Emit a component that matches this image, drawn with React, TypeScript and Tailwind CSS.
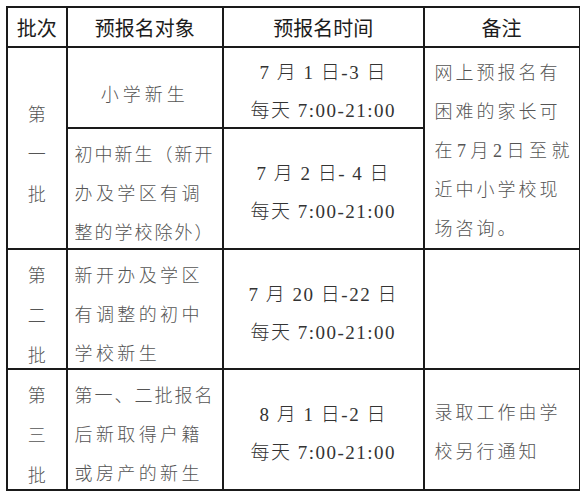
type Line = { text: string; track: string };

function Header({ children }: { children: string }) {
  return (
    <div className="flex items-center justify-center bg-white pt-[2px] text-[20px] text-[#1c1c1c] font-['Noto_Sans_CJK_SC',sans-serif]">
      {children}
    </div>
  );
}

function Batch({ chars, span }: { chars: string[]; span?: boolean }) {
  return (
    <div
      className={`flex flex-col items-center justify-center bg-white pt-[10px] text-[18px] font-light leading-[40px] text-[#555] font-['Noto_Sans_CJK_SC',sans-serif] ${
        span ? "row-span-2" : ""
      }`}
    >
      {chars.map((c, i) => (
        <span key={i}>{c}</span>
      ))}
    </div>
  );
}

function Target({ lines }: { lines: Line[] }) {
  return (
    <div className="flex flex-col justify-center bg-white pl-[7px] pt-[9px] text-[18px] font-light leading-[39px] text-[#555] font-['Noto_Sans_CJK_SC',sans-serif]">
      {lines.map((l, i) => (
        <span key={i} className={`whitespace-nowrap ${l.track}`}>
          {l.text}
        </span>
      ))}
    </div>
  );
}

function Time({ first, second }: { first: string; second: string }) {
  return (
    <div className="flex flex-col items-center justify-center bg-white pt-[10px] text-[19px] font-light leading-[38px] tracking-[1.5px] text-[#333] font-['Liberation_Serif','Noto_Sans_CJK_SC',serif]">
      <span className="whitespace-pre">{first}</span>
      <span className="whitespace-pre">{second}</span>
    </div>
  );
}

function Note({ lines, span }: { lines: Line[]; span?: boolean }) {
  return (
    <div
      className={`flex flex-col justify-center bg-white pl-[10px] pt-[8px] text-[18px] font-light leading-[39px] text-[#555] font-['Liberation_Serif','Noto_Sans_CJK_SC',serif] ${
        span ? "row-span-2" : ""
      }`}
    >
      {lines.map((l, i) => (
        <span key={i} className={`whitespace-nowrap ${l.track}`}>
          {l.text}
        </span>
      ))}
    </div>
  );
}

export default function App() {
  return (
    <div className="h-[496px] w-[586px] bg-white pl-[6px] pt-[6px]">
      <div className="grid w-fit grid-cols-[58.5px_154.5px_199.5px_154px] grid-rows-[38.5px_79.5px_119.5px_118.5px_119.5px] gap-[1.5px] bg-[#1a1a1a] p-[1.5px]">
        <Header>批次</Header>
        <Header>预报名对象</Header>
        <Header>预报名时间</Header>
        <Header>备注</Header>

        <Batch chars={["第", "一", "批"]} span />
        <div className="flex items-center justify-center bg-white pt-[13px] text-[18px] font-light tracking-[4px] text-[#555] font-['Noto_Sans_CJK_SC',sans-serif]">
          小学新生
        </div>
        <Time first="7 月 1 日-3 日" second="每天 7:00-21:00" />
        <Note
          span
          lines={[
            { text: "网上预报名有", track: "tracking-[3px]" },
            { text: "困难的家长可", track: "tracking-[3px]" },
            { text: "在7月2日至就", track: "tracking-[4.5px]" },
            { text: "近中小学校现", track: "tracking-[3px]" },
            { text: "场咨询。", track: "tracking-[3px]" },
          ]}
        />

        <Target
          lines={[
            { text: "初中新生（新开", track: "tracking-[2px]" },
            { text: "办及学区有调", track: "tracking-[3.4px]" },
            { text: "整的学校除外）", track: "tracking-[2px]" },
          ]}
        />
        <Time first="7 月 2 日- 4 日" second="每天 7:00-21:00" />

        <Batch chars={["第", "二", "批"]} />
        <Target
          lines={[
            { text: "新开办及学区", track: "tracking-[3.4px]" },
            { text: "有调整的初中", track: "tracking-[3.4px]" },
            { text: "学校新生", track: "tracking-[3.4px]" },
          ]}
        />
        <Time first="7 月 20 日-22 日" second="每天 7:00-21:00" />
        <div className="bg-white" />

        <Batch chars={["第", "三", "批"]} />
        <Target
          lines={[
            { text: "第一、二批报名", track: "tracking-[2px]" },
            { text: "后新取得户籍", track: "tracking-[3.4px]" },
            { text: "或房产的新生", track: "tracking-[3.4px]" },
          ]}
        />
        <Time first="8 月 1 日-2 日" second="每天 7:00-21:00" />
        <Note
          lines={[
            { text: "录取工作由学", track: "tracking-[3px]" },
            { text: "校另行通知", track: "tracking-[3px]" },
          ]}
        />
      </div>
    </div>
  );
}
